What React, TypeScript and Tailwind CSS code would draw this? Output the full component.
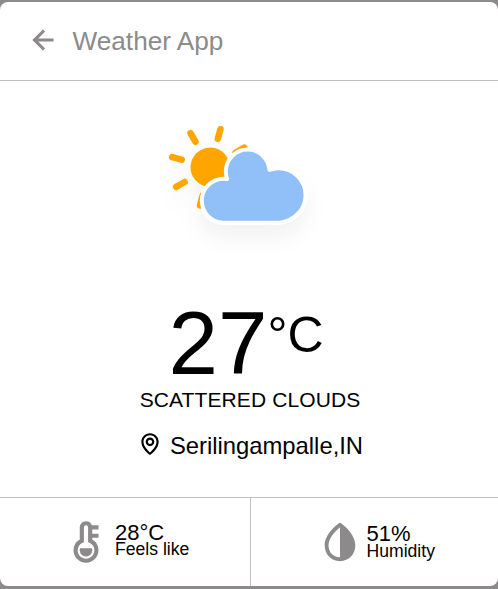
import { BiLeftArrowAlt, BiMap, BiSolidThermometer, BiSolidDropletHalf } from "react-icons/bi";

const rays = [0, 45, 90, 135, 180, 225, 270, 315];

function CloudySun() {
  return (
    <svg className="block h-[210px] w-[210px]" viewBox="0 0 64 64" aria-label="Scattered clouds">
      <defs>
        <filter id="soft" x="-20%" y="-30%" width="150%" height="180%">
          <feDropShadow dx="0" dy="4" stdDeviation="3" floodColor="#000" floodOpacity="0.05" />
        </filter>
      </defs>
      <g filter="url(#soft)">
        <g transform="translate(18.65 26.9) rotate(15)" stroke="orange" strokeWidth="2" strokeLinecap="round">
          {rays.map((angle) => (
            <line key={angle} x1="0" y1="9" x2="0" y2="12" transform={`rotate(${angle})`} />
          ))}
          <circle r="5" fill="orange" />
        </g>
        <path
          d="M47.7,35.4c0-4.6-3.7-8.2-8.2-8.2c-1,0-1.9,0.2-2.8,0.5c-0.3-3.4-3.1-6.2-6.6-6.2c-3.7,0-6.7,3-6.7,6.7c0,0.8,0.2,1.6,0.4,2.3c-0.3-0.1-0.7-0.1-1-0.1c-3.7,0-6.7,3-6.7,6.7c0,3.6,2.9,6.6,6.5,6.7l17.2,0C44.2,43.3,47.7,39.8,47.7,35.4z"
          fill="#91c0f8"
          stroke="#fff"
          strokeWidth="1.2"
          strokeLinejoin="round"
        />
      </g>
    </svg>
  );
}

export default function App() {
  return (
    <div className="h-[589px] w-[498px] bg-[#8d8a8b] pt-[2px] font-['Liberation_Sans',Arial,sans-serif] text-black">
      <main className="flex h-[584px] flex-col overflow-hidden rounded-[8px] bg-white">
        <header className="flex h-[79px] shrink-0 items-center border-b border-[#bfbfbf] pl-[25px] text-[#8d8a8b]">
          <BiLeftArrowAlt className="-mt-[2px] size-[38px]" />
          <h1 className="ml-[9.5px] text-[26.2px] leading-[30px]">Weather App</h1>
        </header>

        <section className="flex h-[416px] shrink-0 flex-col items-center">
          <div className="-mt-[2.5px] mr-[-10px]">
            <CloudySun />
          </div>
          <div className="mt-[7.5px] ml-[-6px] flex h-[90px]">
            <span className="text-[89px] leading-[94px]">27</span>
            <span className="mt-[11px] text-[50px] leading-[56px]">°C</span>
          </div>
          <p className="mt-[2px] ml-[2px] text-[21px] leading-[24px] tracking-[0.1px] uppercase">Scattered Clouds</p>
          <div className="mt-[20px] ml-[2px] flex items-center">
            <BiMap className="size-[26px] -translate-y-[2px]" />
            <span className="ml-[7px] text-[23.8px] leading-[28px]">Serilingampalle,IN</span>
          </div>
        </section>

        <footer className="flex flex-1 border-t border-[#bfbfbf]">
          <div className="flex w-[251px] items-center border-r border-[#bfbfbf] pb-px pl-[61px]">
            <BiSolidThermometer className="size-[50px] text-[#8d8a8b]" />
            <div className="-mt-[2px] ml-[4px]">
              <p className="text-[22px] leading-[17px]">28°C</p>
              <p className="text-[17.6px] leading-[17px]">Feels like</p>
            </div>
          </div>
          <div className="flex items-center pl-[65.5px]">
            <BiSolidDropletHalf className="size-[46px] text-[#8d8a8b]" />
            <div className="ml-[4px]">
              <p className="text-[22px] leading-[17px]">51%</p>
              <p className="text-[17.6px] leading-[18px]">Humidity</p>
            </div>
          </div>
        </footer>
      </main>
    </div>
  );
}
